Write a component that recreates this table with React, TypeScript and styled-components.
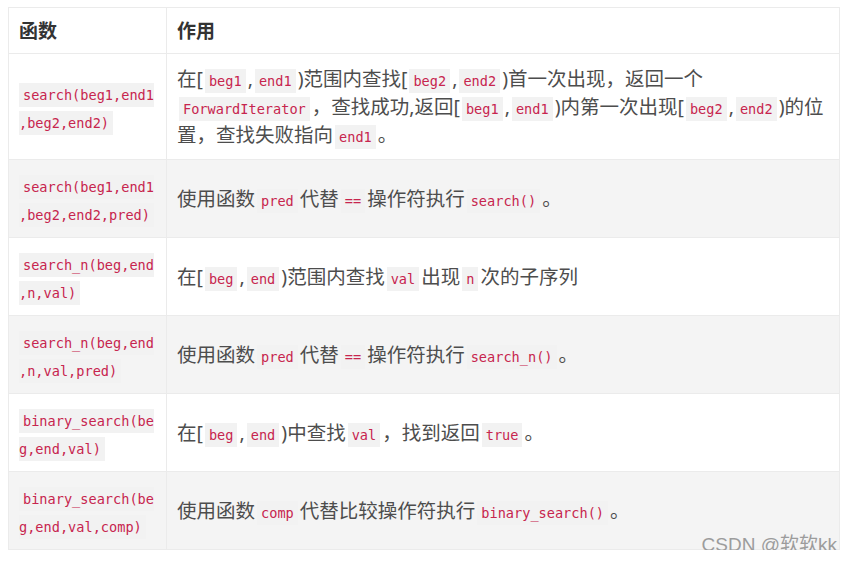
import React from 'react';
import styled, { createGlobalStyle } from 'styled-components';

const GlobalStyle = createGlobalStyle`
  html, body { margin: 0; padding: 0; background: #ffffff; }
  body { font-family: "Noto Sans", "Noto Sans CJK SC", sans-serif; }
`;

const Page = styled.div`
  padding: 7px 0 0 8px;
`;

const TableWrap = styled.div`
  position: relative;
  width: 832px;
`;

const Table = styled.table`
  width: 832px;
  border-collapse: collapse;
  table-layout: fixed;
  font-family: "Noto Sans", "Noto Sans CJK SC", sans-serif;
  font-size: 19.5px;
  line-height: 28px;
  color: #4d4d4d;
`;

const Row = styled.tr<{ $striped?: boolean }>`
  background: ${(p) => (p.$striped ? '#f4f4f4' : '#ffffff')};
`;

const HeadCell = styled.th`
  border: 1px solid #ebebeb;
  padding: 8.5px 10px;
  text-align: left;
  font-size: 19px;
  font-weight: 700;
  color: #333333;
`;

const FnCell = styled.td`
  border: 1px solid #ebebeb;
  padding: 10.5px 10px;
  vertical-align: middle;
  overflow-wrap: anywhere;
  word-wrap: break-word;
`;

const DescCell = styled.td`
  border: 1px solid #ebebeb;
  padding: 10.5px 10px;
  vertical-align: middle;
`;

const Code = styled.code<{ $flush?: boolean }>`
  font-family: "DejaVu Sans Mono", "Liberation Mono", monospace;
  font-size: 13.6px;
  line-height: 1;
  color: #c7254e;
  background: #f2f2f2;
  padding: 4px 4px;
  margin: ${(p) => (p.$flush ? '0' : '0 2px')};
`;

const Watermark = styled.div`
  position: absolute;
  right: 3px;
  bottom: -4px;
  font-family: "Liberation Sans", Arial, "Noto Sans CJK SC", sans-serif;
  font-size: 19px;
  line-height: 1;
  color: #9c9c9c;
  pointer-events: none;
`;

type Item = { fn: string; desc: React.ReactNode };

const items: Item[] = [
  {
    fn: 'search(beg1,end1,beg2,end2)',
    desc: (
      <>
        在[<Code>beg1</Code>,<Code>end1</Code>)范围内查找[<Code>beg2</Code>,<Code>end2</Code>)首一次出现，返回一个<Code>ForwardIterator</Code>，查找成功,返回[<Code>beg1</Code>,<Code>end1</Code>)内第一次出现[<Code>beg2</Code>,<Code>end2</Code>)的位置，查找失败指向<Code>end1</Code>。
      </>
    ),
  },
  {
    fn: 'search(beg1,end1,beg2,end2,pred)',
    desc: (
      <>
        使用函数<Code>pred</Code>代替<Code>==</Code>操作符执行<Code>search()</Code>。
      </>
    ),
  },
  {
    fn: 'search_n(beg,end,n,val)',
    desc: (
      <>
        在[<Code>beg</Code>,<Code>end</Code>)范围内查找<Code>val</Code>出现<Code>n</Code>次的子序列
      </>
    ),
  },
  {
    fn: 'search_n(beg,end,n,val,pred)',
    desc: (
      <>
        使用函数<Code>pred</Code>代替<Code>==</Code>操作符执行<Code>search_n()</Code>。
      </>
    ),
  },
  {
    fn: 'binary_search(beg,end,val)',
    desc: (
      <>
        在[<Code>beg</Code>,<Code>end</Code>)中查找<Code>val</Code>，找到返回<Code>true</Code>。
      </>
    ),
  },
  {
    fn: 'binary_search(beg,end,val,comp)',
    desc: (
      <>
        使用函数<Code>comp</Code>代替比较操作符执行<Code>binary_search()</Code>。
      </>
    ),
  },
];

export default function App() {
  return (
    <>
      <GlobalStyle />
      <Page>
        <TableWrap>
          <Table>
            <colgroup>
              <col style={{ width: '158px' }} />
              <col />
            </colgroup>
            <thead>
              <Row>
                <HeadCell>函数</HeadCell>
                <HeadCell>作用</HeadCell>
              </Row>
            </thead>
            <tbody>
              {items.map((it, i) => (
                <Row key={i} $striped={i % 2 === 1}>
                  <FnCell>
                    <Code $flush>{it.fn}</Code>
                  </FnCell>
                  <DescCell>{it.desc}</DescCell>
                </Row>
              ))}
            </tbody>
          </Table>
          <Watermark>CSDN @软软kk</Watermark>
        </TableWrap>
      </Page>
    </>
  );
}
